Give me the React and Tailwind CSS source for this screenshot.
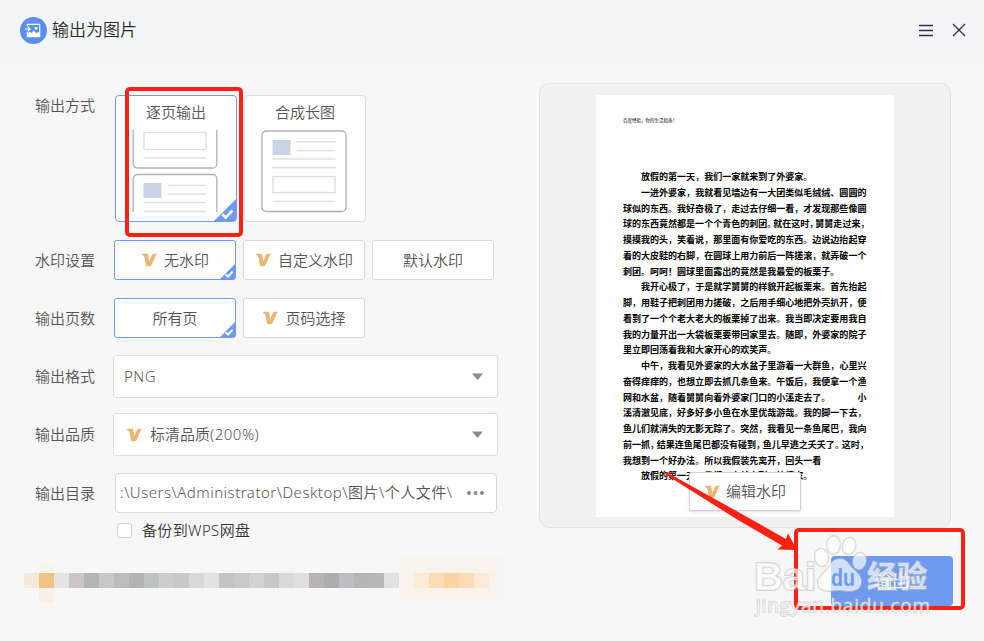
import { useState } from 'react';

const uiFont = "font-['Noto_Sans','Noto_Sans_CJK_SC',sans-serif]";

const VipMark = () => (
  <svg width="16" height="14" viewBox="0 0 16 14" className="shrink-0">
    <path d="M1.200.8h5.800l1.300 7.200 2.200-4.900Q11.200.8 12.600.8h2.900L11 11Q10 13.200 8.500 13.200H5.200L3.500 4.200Q3.200 2.500 1.200 2.300Z" fill="#ebb674" />
  </svg>
);

const Corner = ({ size = 15 }) => (
  <svg width={size} height={size} viewBox="0 0 15 15" className="absolute right-0 bottom-0">
    <path d="M15 0v15H0Z" fill="#6e9bf0" />
    <path d="m5.600 10.400 2.400 2.300 4.600-5" fill="none" stroke="#fff" strokeWidth="1.800" />
  </svg>
);

const LogoIcon = () => (
  <svg width="27" height="27" viewBox="0 0 27 27" className="shrink-0">
    <circle cx="13.500" cy="13.500" r="13.500" fill="#5b8eec" />
    <path d="M7.300 9V7.300h12.400v12.400H7.300V15" fill="none" stroke="#fff" strokeWidth="1.200" strokeLinejoin="round" />
    <path d="M7.200 20v-3.300l2.500-2 2 1.300 1.900-2.500 2.600 2.800 1.600-1.200 2 1.500V20Z" fill="#fff" />
    <rect x="14.700" y="10" width="2.600" height="2.600" fill="#fff" />
    <path d="M4.800 12h4.700M7.600 9.700 9.900 12l-2.300 2.300" fill="none" stroke="#fff" strokeWidth="1.200" />
  </svg>
);

const Row = ({ label, className, children }) => (
  <div className={`flex items-center ${className}`}>
    <span className="w-[78px] shrink-0">{label}</span>
    {children}
  </div>
);

const Choice = ({ text, vip, active, onClick }) => (
  <button
    onClick={onClick}
    className={`relative flex h-10 w-[122px] items-center justify-center rounded-[3px] border bg-white ${
      active ? 'border-[#6e9bf0]' : 'border-[#dadada]'
    }`}
  >
    {vip && <span className="mr-[7px]"><VipMark /></span>}
    <span>{text}</span>
    {active && <Corner />}
  </button>
);

const PagesArt = () => (
  <svg width="86" height="83" viewBox="0 0 86 83" fill="none" className="-ml-[2px]">
    <g stroke="#b1b1b1" strokeWidth="1.300">
      <path d="M1.200 0v34a4 4 0 0 0 4 4h75.600a4 4 0 0 0 4-4V0" />
      <path d="M1.200 82V48.500a4 4 0 0 1 4-4h75.600a4 4 0 0 1 4 4V82" />
    </g>
    <rect x="12" y="2.500" width="62" height="17" stroke="#dedede" strokeWidth="1.300" />
    <path d="M11.500 28H74M35.500 55.500H74M35.500 64H74M11.500 72.500H74M11.500 81.500H74" stroke="#dfdfdf" strokeWidth="1.400" />
    <rect x="11.500" y="53" width="18" height="15" fill="#c9d5e6" />
  </svg>
);

const LongArt = () => (
  <svg width="86" height="83" viewBox="0 0 86 83" fill="none" className="-ml-[2px]">
    <rect x="1" y="1" width="84" height="80.500" rx="4" stroke="#b1b1b1" strokeWidth="1.300" />
    <rect x="11.500" y="10" width="18" height="15" fill="#c9d5e6" />
    <path d="M35.500 11.800H74.500M35.500 20.500H74.500M11.500 29H74.500M11.500 37.800H74.500M11.500 71.500H74.500" stroke="#dfdfdf" strokeWidth="1.400" />
    <rect x="12" y="46.500" width="62" height="16" stroke="#dedede" strokeWidth="1.300" />
  </svg>
);

const ModeCard = ({ text, active, onClick, children }) => (
  <button
    onClick={onClick}
    className={`relative flex h-[127px] w-[122px] flex-col items-center rounded-[4px] border bg-white pt-[5px] ${
      active ? 'border-[#6e9bf0]' : 'border-[#dedede]'
    }`}
  >
    <span className="mb-[6px] h-[23px] leading-[23px]">{text}</span>
    {children}
    {active && <Corner size={22} />}
  </button>
);

const Caret = () => (
  <svg width="11" height="7" viewBox="0 0 11 7"><path d="M0 .5h11L5.500 7Z" fill="#8a8a8a" /></svg>
);

// colours of the blurred-out account strip, one per 15px block
const blocks = [
  '#f6eadd', '#f0c383', '#e3e3e3', '#cbc6c5', '#b3b6b8', '#c6c8c7', '#bbbcbc', '#b2b4b3', '#bec2c1',
  '#cbcdcf', '#c7c8c9', '#d6d8da', '#e3e2e0', '#c3c3c4', '#c9c9c7', '#d3d3d3', '#c8c8c9', '#d8dadb',
  '#e1e0de', '#b8b4b5', '#adadae', '#bbbdc0', '#b8b6b3', '#b6b8ba', '#e0e2e1', '#f8f3ee', '#fdebd7',
  '#fcdcb7', '#fcd3a3', '#fcdbb8', '#fee9d6', '#f8f3ed',
];

const lines = [
  '　　放假的第一天，我们一家就来到了外婆家。',
  '　　一进外婆家，我就看见墙边有一大团类似毛绒绒、圆圆的',
  '球似的东西。我好奇极了，走过去仔细一看，才发现那些像圆',
  '球的东西竟然都是一个个青色的刺团。就在这时，舅舅走过来，',
  '摸摸我的头，笑着说，那里面有你爱吃的东西。边说边抬起穿',
  '着的大皮鞋的右脚，在圆球上用力前后一阵搓滚，就弄破一个',
  '刺团。呵呵！圆球里面露出的竟然是我最爱的板栗子。',
  '　　我开心极了，于是就学舅舅的样貌开起板栗来。首先抬起',
  '脚，用鞋子把刺团用力搓破，之后用手细心地把外壳扒开，便',
  '看到了一个个老大老大的板栗掉了出来。我当即决定要用我自',
  '我的力量开出一大袋板栗要带回家里去。随即，外婆家的院子',
  '里立即回荡着我和大家开心的欢笑声。',
  '　　中午，我看见外婆家的大水盆子里游着一大群鱼，心里兴',
  '奋得痒痒的，也想立即去抓几条鱼来。午饭后，我便拿一个渔',
  '网和水盆，随着舅舅向着外婆家门口的小溪走去了。　　　小',
  '溪清澈见底，好多好多小鱼在水里优哉游哉。我的脚一下去，',
  '鱼儿们就消失的无影无踪了。突然，我看见一条鱼尾巴，我向',
  '前一抓，结果连鱼尾巴都没有碰到，鱼儿早逃之夭夭了。这时，',
  '我想到一个好办法。所以我假装先离开，回头一看',
  '　　放假的第一天，我们一家就来到了外婆家。',
];

// a line with 28 characters has its punctuation squeezed to fit 27 cells
const DocLine = ({ text }) => {
  const marks = text.match(/[，。]/g) || [];
  const squeeze = text.length > 27 ? -9 / marks.length : 0;
  return (
    <p className="h-[15.75px] leading-[15.75px] whitespace-pre">
      {text.split(/([，。])/).map((part, i) =>
        /^[，。]$/.test(part)
          ? <span key={i} className="font-medium" style={{ marginRight: squeeze }}>{part}</span>
          : part
      )}
    </p>
  );
};

const Watermark = () => (
  <svg
    width="190" height="90" viewBox="748 532 190 90"
    className="pointer-events-none absolute top-[532px] left-[748px]"
    fill="#fff" fillOpacity="0.68" stroke="#bdbdbd" strokeOpacity="0.6" strokeWidth="1.800" paintOrder="stroke"
  >
    <text x="754" y="590" fontSize="38" fontWeight="700" textLength="62" lengthAdjust="spacingAndGlyphs" fontFamily="Liberation Sans, sans-serif">Bai</text>
    <ellipse cx="821.500" cy="557.500" rx="6.500" ry="9" transform="rotate(-10 821.500 557.500)" />
    <ellipse cx="833.500" cy="545" rx="6.500" ry="9" />
    <ellipse cx="849" cy="546" rx="6.500" ry="8.500" transform="rotate(12 849 546)" />
    <ellipse cx="859.500" cy="561" rx="6.500" ry="8.500" transform="rotate(12 859.500 561)" />
    <path d="M840 559c7 0 9 6 12 9 4 4 10 8 9 15-1 6-6 8-12 8-4 0-6-1-10-1s-7 1-11 1c-7 0-11-4-10-10 1-5 6-8 9-12 4-5 6-10 13-10Z" />
    <text x="831" y="586" fontSize="24" fontWeight="700" textLength="24" lengthAdjust="spacingAndGlyphs" fontFamily="Liberation Sans, sans-serif" fill="#6e9bf0" fillOpacity="1" stroke="none">du</text>
    <text x="867" y="587" fontSize="30" fontWeight="700" fontFamily="Noto Sans CJK SC, sans-serif">经验</text>
    <text x="756" y="612" fontSize="19" fontWeight="400" strokeWidth="1.400" textLength="174" fontFamily="Open Sans, sans-serif">jingyan.baidu.com</text>
  </svg>
);

const App = () => {
  const [mode, setMode] = useState('pages');
  const [mark, setMark] = useState('无水印');
  const [range, setRange] = useState('所有页');

  return (
    <div className={`relative flex h-[641px] w-[984px] flex-col overflow-hidden bg-[#f7f7f7] text-[15px] font-[350] text-[#555] ${uiFont}`}>
      <header className="flex h-[63px] shrink-0 items-center bg-[#f4f5f7] pr-[18px] pb-[2px] pl-5">
        <LogoIcon />
        <h1 className="-mt-[2px] ml-[5px] text-[17px] font-[350] text-[#2b2b2b]">输出为图片</h1>
        <div className="ml-auto flex items-center gap-[19px]">
          <svg width="14" height="13" viewBox="0 0 14 13" stroke="#28304a" strokeWidth="1.300"><path d="M0 1.500h14M0 6.500h14M0 11.500h14" /></svg>
          <svg width="14" height="14" viewBox="0 0 14 14" stroke="#28304a" strokeWidth="1.300" className="-mt-px"><path d="m1 1 12 12M13 1 1 13" /></svg>
        </div>
      </header>

      <main className="flex">
        <section className="w-[539px] pl-[35px]">
          <div className="flex pt-8">
            <span className="w-20 shrink-0 leading-[21px]">输出方式</span>
            <div className="flex gap-[7px]">
              <ModeCard text="逐页输出" active={mode === 'pages'} onClick={() => setMode('pages')}><PagesArt /></ModeCard>
              <ModeCard text="合成长图" active={mode === 'long'} onClick={() => setMode('long')}><LongArt /></ModeCard>
            </div>
          </div>

          <Row label="水印设置" className="mt-[18px]">
            <div className="ml-px flex gap-[7px]">
              <Choice text="无水印" vip active={mark === '无水印'} onClick={() => setMark('无水印')} />
              <Choice text="自定义水印" vip active={mark === '自定义水印'} onClick={() => setMark('自定义水印')} />
              <Choice text="默认水印" active={mark === '默认水印'} onClick={() => setMark('默认水印')} />
            </div>
          </Row>

          <Row label="输出页数" className="mt-[18px]">
            <div className="ml-px flex gap-[7px]">
              <Choice text="所有页" active={range === '所有页'} onClick={() => setRange('所有页')} />
              <Choice text="页码选择" vip active={range === '页码选择'} onClick={() => setRange('页码选择')} />
            </div>
          </Row>

          <Row label="输出格式" className="mt-[17px]">
            <div className="flex h-[43px] w-[385px] items-center justify-between rounded-[3px] border border-[#dedede] bg-white pr-[14px] pl-[10px]">
              <span className="tracking-[0.5px]">PNG</span>
              <Caret />
            </div>
          </Row>

          <Row label="输出品质" className="mt-[15px]">
            <div className="flex h-[43px] w-[385px] items-center rounded-[3px] border border-[#dedede] bg-white pr-[14px] pl-3">
              <VipMark />
              <span className="mr-auto ml-2">标清品质<span className="tracking-[0.5px]">(200%)</span></span>
              <Caret />
            </div>
          </Row>

          <Row label="输出目录" className="mt-[17px]">
            <div className="ml-[2px] flex h-10 w-[382px] items-center justify-between rounded-[4px] border border-[#dadada] bg-white pr-3 pl-1">
              <span className="-mt-px tracking-[0.5px] whitespace-nowrap">:\Users\Administrator\Desktop\图片\个人文件\</span>
              <svg width="17" height="4" viewBox="0 0 17 4" fill="#8a8a8a">
                <circle cx="2" cy="2" r="2" /><circle cx="8.500" cy="2" r="2" /><circle cx="15" cy="2" r="2" />
              </svg>
            </div>
          </Row>

          <label className="mt-[6px] ml-[82px] flex h-[22px] items-center text-[#333]">
            <span className="h-[15px] w-[15px] rounded-[3px] border border-[#cfcfcf] bg-white" />
            <span className="ml-[10px] tracking-[0.35px]">备份到WPS网盘</span>
          </label>

          <div className="mt-8 -ml-[11px] flex">
            {blocks.map((color, i) => (
              <span key={i} className="h-[15px] w-[15px]" style={{ background: color }} />
            ))}
          </div>
        </section>

        <aside className="mt-5 flex h-[445px] w-[412px] justify-center rounded-[10px] border border-[#e2e2e2] bg-[#f1f1f1] pt-[11px]">
          <article className="h-[422px] w-[298px] bg-white pl-[27px] text-black [text-spacing-trim:space-all]">
            <p className="h-[74px] pt-[21px] font-['Noto_Sans_CJK_SC',sans-serif] text-[4.500px] leading-[8px] font-normal">百度经验，你的生活指南！</p>
            <div className="font-['Noto_Sans_CJK_SC',sans-serif] text-[9.030px] font-bold">
              {lines.map((text, i) => <DocLine key={i} text={text} />)}
            </div>
          </article>
        </aside>
      </main>

      <button className="absolute top-[472px] left-[689px] flex h-[39px] w-[112px] items-center justify-center gap-[6px] rounded-[2px] border border-[#d2d2d2] bg-white shadow">
        <VipMark />
        <span>编辑水印</span>
      </button>
      <button className="absolute top-[556px] left-[831px] h-[50px] w-[122px] rounded-[4px] bg-[#6e9bf0] text-[18px] font-normal text-white">输出</button>

      {/* soft halos around the account strip */}
      <div className="absolute top-[563px] left-[39px] h-[10px] w-[15px] bg-[#f6f5f0]" />
      <div className="absolute top-[588px] left-[39px] h-[15px] w-[15px] bg-[#f8f0e8]" />
      <div className="absolute top-[558px] left-[399px] h-[15px] w-[105px] bg-[#f9f4ee]" />
      <div className="absolute top-[588px] left-[399px] h-[11px] w-[105px] bg-[#f9f3ee]" />

      {/* annotations */}
      <div className="pointer-events-none absolute top-[87px] left-[124.5px] h-[150px] w-[118px] rounded-[5px] border-4 border-[#fe2012]" />
      <div className="pointer-events-none absolute top-[528px] left-[794px] h-[82px] w-[171px] rounded-[5px] border-4 border-[#fe2012]" />
      <svg width="140" height="84" viewBox="660 470 140 84" className="pointer-events-none absolute top-[470px] left-[660px]">
        <path d="M663 471.500 668 473 740 513 786 539 788 533.500 797 550 777.500 549.500 782 545.500 738 520 664 473.500Z" fill="#fe2012" />
      </svg>
      <Watermark />
    </div>
  );
};

export default App;
